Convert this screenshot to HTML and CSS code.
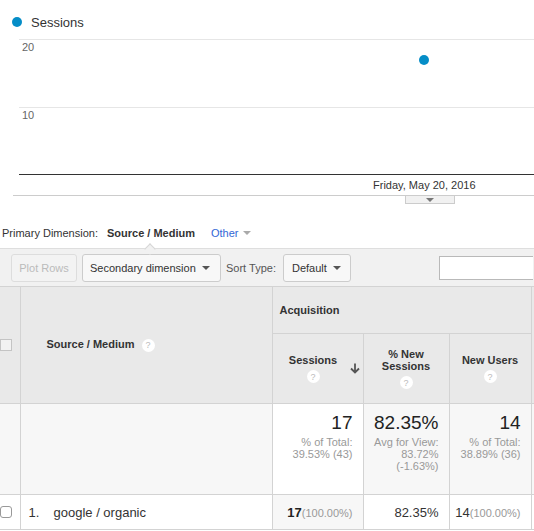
FILE: index.html
```html
<!DOCTYPE html>
<html>
<head>
<meta charset="utf-8">
<link rel="stylesheet" href="styles.css">
</head>
<body>
<div class="legend"><span class="legend-dot"></span><span class="legend-label">Sessions</span></div>
<div class="plot">
  <div class="grid-row g1"><span class="ylabel">20</span><span class="point"></span></div>
  <div class="grid-row g2"><span class="ylabel">10</span></div>
  <div class="baseline"></div>
</div>
<div class="xaxis">Friday, May 20, 2016</div>
<div class="tab"><span class="tab-caret"></span></div>
<div class="pd-row">
  <span class="pd-label">Primary Dimension:</span>
  <span class="pd-current">Source / Medium</span>
  <span class="pd-other">Other</span><span class="caret-sm"></span>
</div>
<div class="toolbar">
  <button class="btn btn-disabled">Plot Rows</button>
  <button class="btn btn-select sec"><span>Secondary dimension</span><span class="caret"></span></button>
  <span class="sort-label">Sort Type:</span>
  <button class="btn btn-select def"><span>Default</span><span class="caret"></span></button>
  <input class="search" type="text">
</div>
<table class="data">
  <colgroup>
    <col class="c-check"><col class="c-dim"><col class="c-sess"><col class="c-new"><col class="c-users"><col class="c-rest">
  </colgroup>
  <thead>
    <tr class="h1">
      <th class="chk" rowspan="2"><span class="cbox"></span></th>
      <th class="dim" rowspan="2">Source / Medium<span class="help">?</span></th>
      <th class="group" colspan="3">Acquisition</th>
      <th class="rest" rowspan="2"></th>
    </tr>
    <tr class="h2">
      <th class="metric">
        <div class="sorted-head">
          <div class="mlabel">Sessions<br><span class="help help-block">?</span></div>
          <svg class="sort-arrow" width="10" height="11" viewBox="0 0 10 11"><path d="M5 0.5V9.5M1 5.5L5 9.5L9 5.5" fill="none" stroke="#555" stroke-width="1.8"/></svg>
        </div>
      </th>
      <th class="metric"><div class="mlabel">% New<br>Sessions<br><span class="help help-block">?</span></div></th>
      <th class="metric"><div class="mlabel">New Users<br><span class="help help-block">?</span></div></th>
    </tr>
  </thead>
  <tbody>
    <tr class="summary">
      <td class="chk"></td>
      <td></td>
      <td class="num sorted-sum"><div class="big">17</div><div class="sub">% of Total:<br>39.53% (43)</div></td>
      <td class="num"><div class="big">82.35%</div><div class="sub">Avg for View:<br>83.72%<br>(-1.63%)</div></td>
      <td class="num"><div class="big">14</div><div class="sub">% of Total:<br>38.89% (36)</div></td>
      <td class="rest"></td>
    </tr>
    <tr class="row">
      <td class="chk"><span class="cbox round"></span></td>
      <td class="dim-val"><span class="idx">1.</span>google / organic</td>
      <td class="num sorted-row"><b>17</b><span class="pct">(100.00%)</span></td>
      <td class="num">82.35%</td>
      <td class="num">14<span class="pct">(100.00%)</span></td>
      <td class="rest"></td>
    </tr>
  </tbody>
</table>
</body>
</html>
```

FILE: styles.css
```css
html, body {
  margin: 0;
  padding: 0;
}
body {
  width: 534px;
  height: 531px;
  overflow: hidden;
  font-family: "Liberation Sans", Arial, sans-serif;
  color: #333;
  background: #fff;
}

/* legend */
.legend {
  height: 39px;
  box-sizing: border-box;
  padding: 5px 0 0 12px;
  display: flex;
  align-items: center;
  font-size: 13px;
  color: #333;
}
.legend-dot {
  width: 10px;
  height: 10px;
  border-radius: 50%;
  background: #058dc7;
  margin-right: 9px;
}

/* chart */
.plot {
  margin-left: 19px;
}
.grid-row {
  position: relative;
  height: 68px;
  box-sizing: border-box;
  border-top: 1px solid #e6e6e6;
}
.g2 {
  height: 67px;
}
.ylabel {
  display: block;
  padding: 1px 0 0 3px;
  font-size: 11px;
  line-height: 13px;
  color: #666;
}
.point {
  position: absolute;
  left: 400px;
  top: 15px;
  width: 10px;
  height: 10px;
  border-radius: 50%;
  background: #058dc7;
}
.baseline {
  border-top: 1px solid #333;
}
.xaxis {
  margin-left: 13px;
  height: 20px;
  padding-left: 360px;
  border-bottom: 1px solid #ccc;
  font-size: 11px;
  line-height: 20px;
  color: #333;
}
.tab {
  margin-left: 405px;
  width: 50px;
  height: 8px;
  box-sizing: border-box;
  background: #f1f1f1;
  border: 1px solid #ccc;
  border-top: none;
  display: flex;
  justify-content: center;
  align-items: center;
}
.tab-caret {
  width: 0;
  height: 0;
  border-left: 4px solid transparent;
  border-right: 4px solid transparent;
  border-top: 4px solid #777;
}

/* primary dimension */
.pd-row {
  display: flex;
  align-items: center;
  padding: 22px 0 8px 2px;
  font-size: 11px;
  line-height: 14px;
  color: #333;
}
.pd-current {
  font-weight: bold;
  margin-left: 9px;
}
.pd-other {
  margin-left: 16px;
  color: #3367d6;
}
.caret-sm {
  margin-left: 4px;
  width: 0;
  height: 0;
  border-left: 4px solid transparent;
  border-right: 4px solid transparent;
  border-top: 4px solid #aaa;
}

/* toolbar */
.toolbar {
  position: relative;
  height: 37px;
  border-top: 1px solid #dedede;
  background: #f1f1f1;
  display: flex;
  align-items: center;
  padding-left: 11px;
}
.toolbar::before {
  content: "";
  position: absolute;
  left: 146px;
  top: -4px;
  width: 7px;
  height: 7px;
  background: #f1f1f1;
  border-left: 1px solid #d6d6d6;
  border-top: 1px solid #d6d6d6;
  transform: rotate(45deg);
}
.btn {
  flex-shrink: 0;
  height: 28px;
  box-sizing: border-box;
  border: 1px solid #ccc;
  border-radius: 3px;
  background: #f8f8f8;
  font-family: "Liberation Sans", Arial, sans-serif;
  font-size: 11px;
  color: #333;
  padding: 0 7px;
  display: inline-flex;
  align-items: center;
}
.btn-disabled {
  width: 66px;
  color: #bbb;
  border-color: #ddd;
  background: #f3f3f3;
  justify-content: center;
}
.btn-select .caret {
  margin-left: auto;
  width: 0;
  height: 0;
  border-left: 4px solid transparent;
  border-right: 4px solid transparent;
  border-top: 4px solid #555;
}
.sec {
  margin-left: 5px;
  width: 139px;
  padding-right: 10px;
}
.sort-label {
  flex-shrink: 0;
  margin-left: 5px;
  font-size: 11px;
  color: #555;
}
.def {
  margin-left: 7px;
  width: 68px;
  padding-left: 8px;
  padding-right: 9px;
}
.search {
  flex-shrink: 0;
  margin-left: 88px;
  width: 94px;
  height: 24px;
  box-sizing: border-box;
  border: 1px solid #b9b9b9;
  border-right: none;
  background: #fff;
  padding: 0;
}

/* table */
.data {
  border-collapse: collapse;
  table-layout: fixed;
  width: 534px;
  font-family: "Liberation Sans", Arial, sans-serif;
}
.c-check { width: 20px; }
.c-dim { width: 252px; }
.c-sess { width: 91px; }
.c-new { width: 86px; }
.c-users { width: 82px; }
.c-rest { width: 3px; }

.data th, .data td {
  border: 1px solid #d3d3d3;
  padding: 0;
}
.data th.rest, .data td.rest {
  border-right: none;
}
.data th.chk, .data td.chk {
  border-left: none;
  text-align: left;
}
.data th {
  background: #e9e9e9;
  font-size: 11px;
  font-weight: bold;
  color: #333;
}
.h1 {
  height: 47px;
}
.h2 {
  height: 70px;
}
.cbox {
  display: block;
  width: 12px;
  height: 12px;
  box-sizing: border-box;
  border: 1px solid #c4c4c4;
  background: #f2f2f2;
}
.cbox.round {
  border-radius: 3px;
  border-color: #999;
  background: #fff;
}
.dim {
  text-align: left;
  padding-left: 26px !important;
}
.help {
  display: inline-flex;
  justify-content: center;
  align-items: center;
  width: 13px;
  height: 13px;
  border-radius: 50%;
  background: #fff;
  color: #bbb;
  font-size: 9px;
  font-weight: normal;
  vertical-align: middle;
  margin-left: 7px;
}
.help-block {
  margin: 4px 0 0 0;
}
.group {
  text-align: left;
  padding-left: 7px !important;
}
.metric {
  text-align: center;
  line-height: 12px;
}
.sorted-head {
  display: flex;
  align-items: center;
  padding-right: 3px;
}
.sorted-head .mlabel {
  flex: 1;
  padding-left: 4px;
}
.sort-arrow {
  display: block;
  flex-shrink: 0;
}

.summary {
  height: 91px;
}
.summary td {
  background: #f7f7f7;
  vertical-align: top;
}
.summary td.sorted-sum {
  background: #fff;
}
.num {
  text-align: right;
  padding-right: 10px !important;
}
.summary .num {
  padding-top: 8px !important;
}
.big {
  font-size: 19px;
  line-height: 22px;
  color: #222;
}
.sub {
  margin-top: 2px;
  font-size: 11px;
  line-height: 12px;
  color: #999;
}

.row {
  height: 35px;
}
.row td {
  background: #fff;
  font-size: 13px;
  color: #333;
  vertical-align: middle;
}
.row td.sorted-row {
  background: #f7f7f7;
}
.dim-val {
  padding-left: 8px !important;
}
.idx {
  display: inline-block;
  width: 25px;
}
.pct {
  font-size: 11px;
  color: #999;
}
.row b {
  font-weight: bold;
  color: #222;
}
```
